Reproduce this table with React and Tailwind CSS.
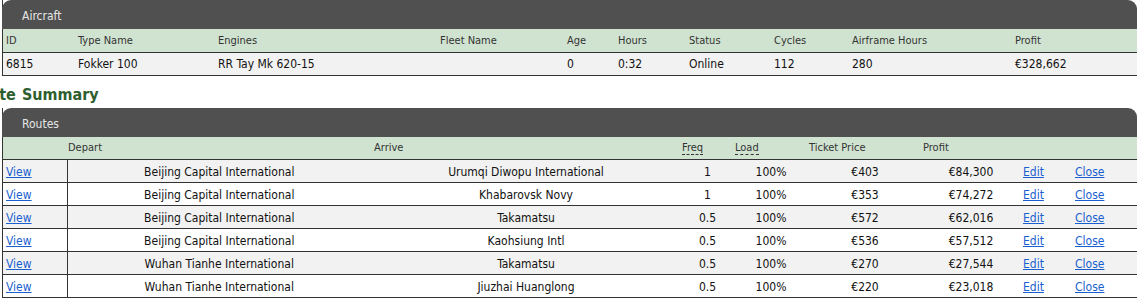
import React from 'react';

const aircraftCols = [
    { label: 'ID', w: 'w-[74px]', pad: 'pl-[3px]' },
    { label: 'Type Name', w: 'w-[140px]', pad: 'pl-[1px]' },
    { label: 'Engines', w: 'w-[222px]', pad: 'pl-[1px]' },
    { label: 'Fleet Name', w: 'w-[127px]', pad: 'pl-[1px]' },
    { label: 'Age', w: 'w-[51px]', pad: 'pl-[1px]' },
    { label: 'Hours', w: 'w-[71px]', pad: 'pl-[1px]' },
    { label: 'Status', w: 'w-[85px]', pad: 'pl-[1px]' },
    { label: 'Cycles', w: 'w-[78px]', pad: 'pl-[1px]' },
    { label: 'Airframe Hours', w: 'w-[163px]', pad: 'pl-[1px]' },
    { label: 'Profit', w: '', pad: 'pl-[1px]' },
];

const aircraft = ['6815', 'Fokker 100', 'RR Tay Mk 620-15', '', '0', '0:32', 'Online', '112', '280', '€328,662'];

const routes = [
    ['Beijing Capital International', 'Urumqi Diwopu International', '1', '100%', '€403', '€84,300'],
    ['Beijing Capital International', 'Khabarovsk Novy', '1', '100%', '€353', '€74,272'],
    ['Beijing Capital International', 'Takamatsu', '0.5', '100%', '€572', '€62,016'],
    ['Beijing Capital International', 'Kaohsiung Intl', '0.5', '100%', '€536', '€57,512'],
    ['Wuhan Tianhe International', 'Takamatsu', '0.5', '100%', '€270', '€27,544'],
    ['Wuhan Tianhe International', 'Jiuzhai Huanglong', '0.5', '100%', '€220', '€23,018'],
];

function Panel({ title, children }) {
    return (
        <div className="ml-[2px] w-[1135px] border-l border-[#333]">
            <div className="h-[29px] rounded-t-[9px] bg-[#505050] pl-[20px] pt-[7px] text-[12px] text-[#e6e6e6] -ml-px">
                {title}
            </div>
            {children}
        </div>
    );
}

function Link({ children }) {
    return <a href="#" className="text-[#1a5fd0] underline">{children}</a>;
}

export default function App() {
    return (
        <div className="w-[1138px] overflow-hidden bg-white font-['DejaVu_Sans_Condensed','DejaVu_Sans',sans-serif] text-[11px] text-[#111]">
            <Panel title="Aircraft">
                <table className="w-full table-fixed border-collapse">
                    <thead>
                        <tr className="h-[23px] bg-[#d0e3d0] border-b border-[#333]">
                            {aircraftCols.map((c) => (
                                <th key={c.label} className={`${c.w} ${c.pad} pt-[2px] text-left font-normal text-[#333]`}>
                                    {c.label}
                                </th>
                            ))}
                        </tr>
                    </thead>
                    <tbody>
                        <tr className="h-[23px] bg-[#f2f2f2] border-b border-[#333]">
                            {aircraft.map((v, i) => (
                                <td key={i} className={`${aircraftCols[i].pad} pt-[1px] text-[12px]`}>{v}</td>
                            ))}
                        </tr>
                    </tbody>
                </table>
            </Panel>

            <h2 className="-ml-[32px] h-[32px] pt-[9px] text-[16px] font-bold leading-[20px] text-[#2e5e2e] [word-spacing:1px]">
                Route Summary
            </h2>

            <Panel title="Routes">
                <table className="w-full table-fixed border-collapse">
                    <thead>
                        <tr className="h-[23px] bg-[#d0e3d0] border-b border-[#333] text-[#333]">
                            <th className="w-[64px]"></th>
                            <th className="w-[304px] pl-[1px] pt-[1px] text-left font-normal">Depart</th>
                            <th className="w-[310px] pl-[3px] pt-[1px] text-left font-normal">Arrive</th>
                            <th className="w-[53px] pl-[1px] pt-[1px] text-left font-normal">
                                <span className="border-b border-dashed border-[#333]">Freq</span>
                            </th>
                            <th className="w-[74px] pl-[1px] pt-[1px] text-left font-normal">
                                <span className="border-b border-dashed border-[#333]">Load</span>
                            </th>
                            <th className="w-[114px] pl-[1px] pt-[1px] text-left font-normal">Ticket Price</th>
                            <th className="w-[98px] pl-[1px] pt-[1px] text-left font-normal">Profit</th>
                            <th className="w-[52px]"></th>
                            <th></th>
                        </tr>
                    </thead>
                    <tbody className="text-[12px]">
                        {routes.map((r, i) => (
                            <tr key={i} className={`h-[23px] border-b border-[#333] ${i % 2 === 0 ? 'bg-[#f2f2f2]' : 'bg-white'}`}>
                                <td className="border-r border-[#333] pl-[3px] pt-[1px]"><Link>View</Link></td>
                                {r.map((v, j) => (
                                    <td key={j} className="pt-[1px] text-center">{v}</td>
                                ))}
                                <td className="pl-[3px] pt-[1px]"><Link>Edit</Link></td>
                                <td className="pl-[3px] pt-[1px]"><Link>Close</Link></td>
                            </tr>
                        ))}
                    </tbody>
                </table>
            </Panel>
        </div>
    );
}
